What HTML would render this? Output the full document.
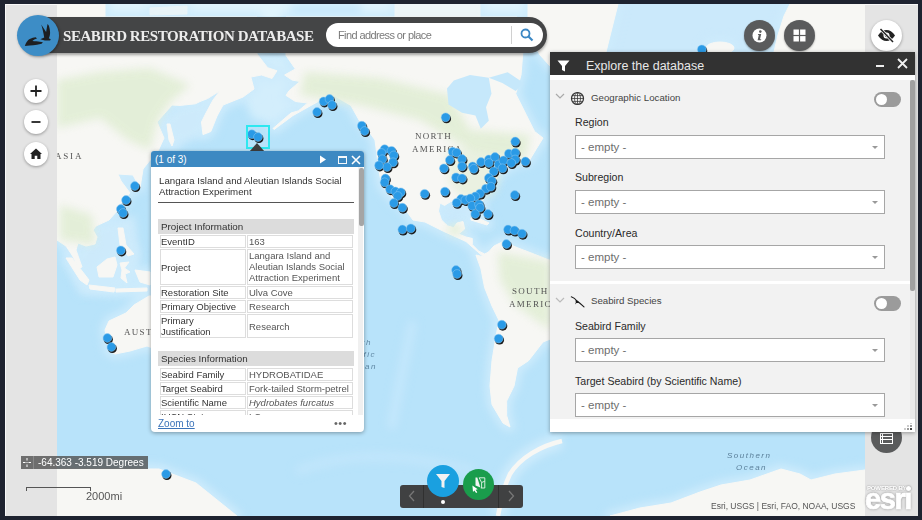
<!DOCTYPE html>
<html><head><meta charset="utf-8">
<style>
*{box-sizing:border-box;margin:0;padding:0}
html,body{width:922px;height:520px;overflow:hidden;background:#1e2330;font-family:"Liberation Sans",sans-serif;position:relative}
.a{position:absolute}
#frame{left:5px;top:4px;width:913px;height:512px;background:#e4e4e4;overflow:hidden}
#map{left:57px;top:4px;width:808px;height:512px;background:#b9e0f7;overflow:hidden}
#titlebar{left:30px;top:17px;width:517px;height:36px;background:#444546;border-radius:0 18px 18px 0;box-shadow:0 2px 3px rgba(0,0,0,.35)}
#logo{left:17px;top:15px;width:42px;height:41px;border-radius:50%;background:#3d8dc6;box-shadow:1px 1px 3px rgba(0,0,0,.35)}
#ttl{left:63px;top:28px;font-family:"Liberation Serif",serif;font-weight:bold;font-size:15px;color:#ececec;letter-spacing:-0.45px;white-space:nowrap;line-height:17px}
#search{left:326px;top:23px;width:217px;height:24px;background:#fff;border-radius:12px}
#search .ph{position:absolute;left:12px;top:6px;font-size:11px;color:#7a7a7a;letter-spacing:-0.6px;white-space:nowrap}
#search .sep{position:absolute;left:185px;top:3px;width:1px;height:18px;background:#d0d0d0}
.navbtn{position:absolute;width:24px;height:24px;border-radius:50%;background:#fff;box-shadow:0 1px 3px rgba(0,0,0,.35)}
.cbtn{position:absolute;width:31px;height:31px;border-radius:50%;background:#5a5b5c;box-shadow:0 1px 2px rgba(0,0,0,.3)}

#panel{left:550px;top:52px;width:365px;height:380px;background:#fff;box-shadow:0 1px 4px rgba(0,0,0,.35)}
#phead{left:550px;top:52px;width:365px;height:23px;background:#323232}
#ptitle{left:586px;top:59px;font-size:12.5px;color:#e8e8e8;white-space:nowrap;line-height:15px}
#pbody{left:550px;top:80px;width:360px;height:339px;background:#f2f2f2}
#sb{left:910px;top:80px;width:5px;height:339px;background:#e9e9e9}
#sbt{left:910px;top:80px;width:5px;height:211px;background:#a0a0a0;border-radius:2px}
.sech{position:absolute;font-size:9.7px;color:#444;white-space:nowrap;line-height:12px}
.lbl{position:absolute;left:575px;font-size:10.6px;color:#2a2a2a;white-space:nowrap;line-height:13px}
.sel{position:absolute;left:575px;width:310px;height:24px;background:#fff;border:1px solid #a6a6a6}
.sel span{position:absolute;left:5px;top:5px;font-size:11.5px;color:#6e6e6e;line-height:13px;white-space:nowrap}
.sel i{position:absolute;right:6px;top:10px;width:0;height:0;border-left:3.5px solid transparent;border-right:3.5px solid transparent;border-top:3.5px solid #999}
.tog{position:absolute;left:874px;margin-top:0.5px;width:26.5px;height:15px;border-radius:8px;background:#9b9b9b}
.tog i{position:absolute;left:2px;top:2px;width:11px;height:11px;border-radius:50%;background:#fff}

#popup{left:151px;top:151px;width:213px;height:281px;background:#fff;border-radius:3px 3px 4px 4px;box-shadow:0 1px 4px rgba(0,0,0,.35)}
#pophead{left:151px;top:151px;width:213px;height:16px;background:#3d89c2;border-radius:3px 3px 0 0}
.pt{position:absolute;font-size:10px;color:#333;white-space:nowrap;line-height:11px}
.tr{position:absolute;left:159px;width:194px;height:13px}
.tr .c1{position:absolute;left:1px;top:0;width:86px;height:100%;border:1px solid #ddd}
.tr .c2{position:absolute;left:88px;top:0;width:106px;height:100%;border:1px solid #ddd}
.tr span{position:absolute;left:0px;font-size:9.5px;color:#333;white-space:nowrap;line-height:11px}
.tr .c2 span{color:#555;left:1px}
.bar{position:absolute;left:158px;width:196px;height:15px;background:#dcdcdc}
.bar span{position:absolute;left:3px;top:2px;font-size:9.8px;color:#333;line-height:11px;white-space:nowrap}
</style></head><body>
<div id="frame" class="a"></div>
<div class="a" style="left:5px;top:4px;width:913px;height:1px;background:#f8f8f8"></div>
<div class="a" style="left:5px;top:4px;width:1px;height:512px;background:#f8f8f8"></div>
<div id="map" class="a">
  <svg width="808" height="512" viewBox="57 4 808 512" style="position:absolute;left:0;top:0">
<rect x="57" y="4" width="808" height="512" fill="#b8e3fa"/>
<rect x="57" y="4" width="808" height="14" fill="#e0f4fd"/><rect x="291" y="4" width="70" height="14" fill="#c6e7fb" filter="url(#bl)"/><rect x="600" y="4" width="200" height="50" fill="#cbe9fb"/>
<defs><filter id="bl" x="-20%" y="-20%" width="140%" height="140%"><feGaussianBlur stdDeviation="4"/></filter></defs><g stroke="#c4e7fc" fill="none" filter="url(#bl)" stroke-linecap="round"><path d="M412,325 C405,360 398,390 392,425" stroke-width="9"/><path d="M300,470 C340,455 390,450 470,470" stroke-width="10" opacity="0.7"/></g><g fill="#cdeafb" filter="url(#bl)"><path d="M250,77 L257,54 L286,55 L300,85 L302,105 L276,126 L252,118 L243,97 Z" fill="#d3eefc"/><path d="M157,122 L180,105 L221,98 L205,135 L170,150 Z"/><path d="M95,225 L135,215 L140,260 L120,290 L80,295 L70,260 Z"/><path d="M440,205 L480,200 L489,225 L465,222 L445,222 Z" fill="#c9e8fb"/></g><g fill="#cdebfc" stroke="#cdebfc" stroke-width="10" stroke-linejoin="round" filter="url(#bl)">
<path d="M57,4 L105,4 L105,17 L257,17 L257,54 L267.7,67.7 L277,70.8 L272,78.5 L261.5,75 L250.8,77 L254,89 L243,97 L223,105 L217,116 L210.8,131.5 L203,134.6 L201.5,122 L206,113 L213,100 L220,90.8 L207.7,98.5 L200,101.5 L195.4,103.8 L180,105.4 L172,105 L157,122 L164,138 L158.5,150 L149,161.5 L143,169 L140,188 L133,175 L118,174 L121,181 L130,193 L121,203 L117,211 L109,220 L96,226 L93,230 L97,237 L95,244 L86,246 L78,243 L76,250 L82,267 L79,268 L72,255 L66,246 L57,240 Z"/><path d="M167,124 L170,124 L174,140 L172,146 L169,140 Z"/>
<path d="M66,258 L72,258 L89,280 L87,285 L80,280 Z"/>
<path d="M89,285 L115,288 L114,292 L90,289 Z"/>
<path d="M97,267 L107,259 L115,257 L117,265 L113,277 L99,277 Z"/>
<path d="M118,228 L123,228 L126,245 L134,254 L128,256 L120,245 Z"/><path d="M120,263 L129,262 L124.5,268 L130,272 L125,274 L127,283 L121,278 L122,270 Z"/><path d="M116,289 L147,288 L147,291 L116,292 Z"/><path d="M135,270 L150,272 L150,285 L140,282 Z"/>
<path d="M149,296 L134,305 L126,313 L109,321 L105,330 L107,340 L109,351 L115,354 L130,351 L147,346 L250,380 L250,296 Z"/>
<path d="M470.8,218 L480,219 L489,223 L487,225 L471,220 Z"/><path d="M57,469 L159,469 L196,483 L237,516 L57,516 Z"/>
<path d="M610,516 L640,508 L671,503 L700,492 L721,485 L750,480 L781,469 L800,474 L811,480 L835,474 L865,470 L865,516 Z"/>
<path d="M290,17 L517,17 L523,50 L521,75 L515.7,93.8 L526.5,115.4 L534.6,131.5 L543,138 L535,151 L529,161 L515,163 L500,173 L492,185 L485,191 L481.5,206 L475.4,217 L470.8,203 L466,200 L450.8,201.5 L444.6,205.4 L440,203 L438.5,211 L441.5,220 L447.7,226 L453.8,227.7 L457,223 L463,221.5 L464.6,229 L458.5,234 L466,237 L472.3,238.5 L472.3,244.6 L478.5,251 L484.6,254 L490.8,251 L494,246 L486,259 L466,241.5 L443,231 L425,222 L413,220 L405,209 L393,198.5 L382,186 L379,171 L375,140 L370,133 L359,120 L351,105.5 L340,99 L330,93 L319,101 L293,115.5 L274,129.5 L273,128.5 L291,113 L298.5,110.8 L307.7,103 L295.4,101.5 L286,95.4 L289,90.8 L300,81.5 L292,80 L284.6,75 L295.4,69 L286,55.4 L286,17 Z"/>
<path d="M484,257 L494,246 L503,241.6 L518,248 L526,251 L549,260 L580,266 L610,290 L600,320 L560,335 L543,342 L528.5,360.7 L517.5,368 L514,386 L506.6,401 L506.6,415.5 L510,427 L503,423 L492,404.5 L490,386 L492,360.7 L495.6,338.7 L499,320.4 L492,306 L484.6,287.5 L481,269 L476,255 Z"/>
<path d="M528,4 L618,4 L606,52 L580,70 L550,66 L540,55 L532,40 L528,17 Z"/><path d="M395,4 L480,4 L480,17 L395,17 Z" opacity="0.7"/><path d="M150,8 L187,6 L187,14 L150,15 Z" opacity="0.6"/><ellipse cx="720" cy="48" rx="14" ry="6"/>
<path d="M790,4 L865,4 L865,52 L774,52 L778,35 L784,16 Z"/>
</g><g fill="#f7f7f4" stroke="#f7f7f4" stroke-width="1">
<path d="M57,4 L105,4 L105,17 L257,17 L257,54 L267.7,67.7 L277,70.8 L272,78.5 L261.5,75 L250.8,77 L254,89 L243,97 L223,105 L217,116 L210.8,131.5 L203,134.6 L201.5,122 L206,113 L213,100 L220,90.8 L207.7,98.5 L200,101.5 L195.4,103.8 L180,105.4 L172,105 L157,122 L164,138 L158.5,150 L149,161.5 L143,169 L140,188 L133,175 L118,174 L121,181 L130,193 L121,203 L117,211 L109,220 L96,226 L93,230 L97,237 L95,244 L86,246 L78,243 L76,250 L82,267 L79,268 L72,255 L66,246 L57,240 Z"/><path d="M167,124 L170,124 L174,140 L172,146 L169,140 Z"/>
<path d="M66,258 L72,258 L89,280 L87,285 L80,280 Z"/>
<path d="M89,285 L115,288 L114,292 L90,289 Z"/>
<path d="M97,267 L107,259 L115,257 L117,265 L113,277 L99,277 Z"/>
<path d="M118,228 L123,228 L126,245 L134,254 L128,256 L120,245 Z"/><path d="M120,263 L129,262 L124.5,268 L130,272 L125,274 L127,283 L121,278 L122,270 Z"/><path d="M116,289 L147,288 L147,291 L116,292 Z"/><path d="M135,270 L150,272 L150,285 L140,282 Z"/>
<path d="M149,296 L134,305 L126,313 L109,321 L105,330 L107,340 L109,351 L115,354 L130,351 L147,346 L250,380 L250,296 Z"/>
<path d="M470.8,218 L480,219 L489,223 L487,225 L471,220 Z"/><path d="M57,469 L159,469 L196,483 L237,516 L57,516 Z"/>
<path d="M610,516 L640,508 L671,503 L700,492 L721,485 L750,480 L781,469 L800,474 L811,480 L835,474 L865,470 L865,516 Z"/>
<path d="M290,17 L517,17 L523,50 L521,75 L515.7,93.8 L526.5,115.4 L534.6,131.5 L543,138 L535,151 L529,161 L515,163 L500,173 L492,185 L485,191 L481.5,206 L475.4,217 L470.8,203 L466,200 L450.8,201.5 L444.6,205.4 L440,203 L438.5,211 L441.5,220 L447.7,226 L453.8,227.7 L457,223 L463,221.5 L464.6,229 L458.5,234 L466,237 L472.3,238.5 L472.3,244.6 L478.5,251 L484.6,254 L490.8,251 L494,246 L486,259 L466,241.5 L443,231 L425,222 L413,220 L405,209 L393,198.5 L382,186 L379,171 L375,140 L370,133 L359,120 L351,105.5 L340,99 L330,93 L319,101 L293,115.5 L274,129.5 L273,128.5 L291,113 L298.5,110.8 L307.7,103 L295.4,101.5 L286,95.4 L289,90.8 L300,81.5 L292,80 L284.6,75 L295.4,69 L286,55.4 L286,17 Z"/>
<path d="M484,257 L494,246 L503,241.6 L518,248 L526,251 L549,260 L580,266 L610,290 L600,320 L560,335 L543,342 L528.5,360.7 L517.5,368 L514,386 L506.6,401 L506.6,415.5 L510,427 L503,423 L492,404.5 L490,386 L492,360.7 L495.6,338.7 L499,320.4 L492,306 L484.6,287.5 L481,269 L476,255 Z"/>
<path d="M528,4 L618,4 L606,52 L580,70 L550,66 L540,55 L532,40 L528,17 Z"/><path d="M395,4 L480,4 L480,17 L395,17 Z" opacity="0.7"/><path d="M150,8 L187,6 L187,14 L150,15 Z" opacity="0.6"/><ellipse cx="720" cy="48" rx="14" ry="6"/>
<path d="M790,4 L865,4 L865,52 L774,52 L778,35 L784,16 Z"/>
</g><g fill="#e0edd3" opacity="0.85" filter="url(#bl)"><path d="M57,80 L100,72 L150,68 L190,85 L170,102 L157,122 L150,150 L128,140 L100,118 L57,128 Z"/><path d="M60,205 L92,215 L95,245 L78,242 L60,240 Z"/><path d="M305,72 L380,78 L450,95 L470,130 L530,135 L525,160 L470,150 L420,120 L360,105 L300,95 Z"/><path d="M445,150 L505,150 L495,195 L465,200 L450,185 Z" opacity="0.7"/><path d="M498,252 L550,262 L550,330 L515,305 L500,280 Z"/><ellipse cx="455" cy="230" rx="8" ry="5"/></g>
<path d="M562,441 C540,446 520,458 510,474 C503,488 500,505 498,516" stroke="#cdebfc" stroke-width="16" fill="none" filter="url(#bl)"/><path d="M562,441 C540,446 520,458 510,474 C503,488 500,505 498,516" stroke="#f7f7f4" stroke-width="4.5" fill="none"/>

<g font-family="Liberation Serif" font-size="9" fill="#555" letter-spacing="1.3">
<text x="55" y="159" letter-spacing="1.8">ASIA</text>
<text x="124" y="335">AUST</text>
<text x="415" y="139">NORTH</text>
<text x="412" y="152">AMERICA</text>
<text x="512" y="294">SOUTH</text>
<text x="509" y="307">AMERIC</text>
</g>
<g font-family="Liberation Sans" font-style="italic" font-size="8" fill="#5f87a3" letter-spacing="1.5" text-anchor="end">
<text x="372" y="345">South</text><text x="376" y="357">Pacific</text><text x="377" y="369">Ocean</text></g>
<g fill="#c6e8fb">
<path d="M453.8,80.4 L470,75 L488.8,77.7 L491.5,93.8 L486,107.3 L488.8,120.8 L480.8,128.8 L475.4,115.4 L462,112.7 L448.5,104.6 L447,88.5 Z"/>
<path d="M488.8,77.7 L507.7,72.3 L523.8,83 L515.7,91 L502.3,83 Z"/>
</g>
<g fill="#1c1c1c"><circle cx="108.3" cy="339.4" r="4.6"/><circle cx="112.3" cy="348.4" r="4.6"/><circle cx="135.7" cy="187.4" r="4.6"/><circle cx="126.9" cy="201.4" r="4.6"/><circle cx="121.7" cy="210.4" r="4.6"/><circle cx="123.9" cy="214.4" r="4.6"/><circle cx="121.7" cy="251.8" r="4.6"/><circle cx="166.9" cy="475.4" r="4.6"/><circle cx="252.7" cy="135.6" r="4.6"/><circle cx="258.9" cy="138.4" r="4.6"/><circle cx="317.9" cy="113.4" r="4.6"/><circle cx="324.5" cy="102.8" r="4.6"/><circle cx="330.4" cy="100.4" r="4.6"/><circle cx="332.9" cy="106.4" r="4.6"/><circle cx="362.7" cy="127.1" r="4.6"/><circle cx="365.5" cy="132.4" r="4.6"/><circle cx="446.5" cy="118.7" r="4.6"/><circle cx="385.5" cy="150.6" r="4.6"/><circle cx="382.4" cy="154.4" r="4.6"/><circle cx="392.4" cy="152.2" r="4.6"/><circle cx="394.7" cy="156.8" r="4.6"/><circle cx="383.2" cy="160.6" r="4.6"/><circle cx="393.9" cy="163.7" r="4.6"/><circle cx="387.9" cy="168.4" r="4.6"/><circle cx="379.9" cy="166.8" r="4.6"/><circle cx="386.3" cy="179.9" r="4.6"/><circle cx="385.5" cy="183.7" r="4.6"/><circle cx="390.9" cy="190.6" r="4.6"/><circle cx="396.3" cy="192.9" r="4.6"/><circle cx="401.7" cy="193.7" r="4.6"/><circle cx="398.6" cy="197.4" r="4.6"/><circle cx="394.7" cy="204.4" r="4.6"/><circle cx="403.2" cy="209.1" r="4.6"/><circle cx="425.5" cy="195.2" r="4.6"/><circle cx="453.6" cy="153.1" r="4.6"/><circle cx="457.5" cy="154.1" r="4.6"/><circle cx="450.7" cy="161.4" r="4.6"/><circle cx="462.9" cy="160.4" r="4.6"/><circle cx="462.9" cy="167.8" r="4.6"/><circle cx="444.8" cy="169.7" r="4.6"/><circle cx="473.6" cy="167.8" r="4.6"/><circle cx="474.6" cy="170.2" r="4.6"/><circle cx="481.9" cy="163.4" r="4.6"/><circle cx="489.7" cy="160.9" r="4.6"/><circle cx="489.7" cy="164.4" r="4.6"/><circle cx="495.9" cy="158.4" r="4.6"/><circle cx="499.5" cy="165.8" r="4.6"/><circle cx="504.4" cy="161.9" r="4.6"/><circle cx="503.4" cy="169.7" r="4.6"/><circle cx="494.6" cy="172.7" r="4.6"/><circle cx="509.7" cy="155.1" r="4.6"/><circle cx="516.1" cy="154.1" r="4.6"/><circle cx="516.1" cy="160.9" r="4.6"/><circle cx="512.2" cy="164.4" r="4.6"/><circle cx="526.3" cy="162.9" r="4.6"/><circle cx="516.1" cy="142.9" r="4.6"/><circle cx="456.9" cy="178.8" r="4.6"/><circle cx="462.9" cy="179.8" r="4.6"/><circle cx="489.7" cy="179.4" r="4.6"/><circle cx="492.7" cy="182.3" r="4.6"/><circle cx="486.8" cy="190.1" r="4.6"/><circle cx="491.7" cy="188.1" r="4.6"/><circle cx="480.9" cy="195.0" r="4.6"/><circle cx="476.1" cy="197.9" r="4.6"/><circle cx="445.8" cy="193.0" r="4.6"/><circle cx="461.9" cy="200.4" r="4.6"/><circle cx="466.3" cy="201.4" r="4.6"/><circle cx="471.2" cy="199.8" r="4.6"/><circle cx="457.5" cy="204.2" r="4.6"/><circle cx="473.1" cy="207.2" r="4.6"/><circle cx="479.9" cy="205.7" r="4.6"/><circle cx="480.9" cy="209.1" r="4.6"/><circle cx="476.1" cy="215.4" r="4.6"/><circle cx="488.8" cy="215.4" r="4.6"/><circle cx="515.6" cy="196.4" r="4.6"/><circle cx="403.2" cy="230.9" r="4.6"/><circle cx="411.7" cy="229.8" r="4.6"/><circle cx="508.9" cy="230.9" r="4.6"/><circle cx="515.4" cy="231.9" r="4.6"/><circle cx="522.9" cy="235.1" r="4.6"/><circle cx="507.3" cy="245.4" r="4.6"/><circle cx="456.9" cy="271.4" r="4.6"/><circle cx="457.9" cy="275.4" r="4.6"/><circle cx="502.7" cy="326.1" r="4.6"/><circle cx="499.5" cy="340.0" r="4.6"/><circle cx="702.7" cy="50.8" r="4.6"/></g><g fill="#2a9ae6" stroke="#8fcaf2" stroke-width="0.5"><circle cx="107.4" cy="338.0" r="4.4"/><circle cx="111.4" cy="347.0" r="4.4"/><circle cx="134.8" cy="186.0" r="4.4"/><circle cx="126.0" cy="200.0" r="4.4"/><circle cx="120.8" cy="209.0" r="4.4"/><circle cx="123.0" cy="213.0" r="4.4"/><circle cx="120.8" cy="250.4" r="4.4"/><circle cx="166.0" cy="474.0" r="4.4"/><circle cx="251.8" cy="134.2" r="4.4"/><circle cx="258.0" cy="137.0" r="4.4"/><circle cx="317.0" cy="112.0" r="4.4"/><circle cx="323.6" cy="101.4" r="4.4"/><circle cx="329.5" cy="99.0" r="4.4"/><circle cx="332.0" cy="105.0" r="4.4"/><circle cx="361.8" cy="125.7" r="4.4"/><circle cx="364.6" cy="131.0" r="4.4"/><circle cx="445.6" cy="117.3" r="4.4"/><circle cx="384.6" cy="149.2" r="4.4"/><circle cx="381.5" cy="153.0" r="4.4"/><circle cx="391.5" cy="150.8" r="4.4"/><circle cx="393.8" cy="155.4" r="4.4"/><circle cx="382.3" cy="159.2" r="4.4"/><circle cx="393.0" cy="162.3" r="4.4"/><circle cx="387.0" cy="167.0" r="4.4"/><circle cx="379.0" cy="165.4" r="4.4"/><circle cx="385.4" cy="178.5" r="4.4"/><circle cx="384.6" cy="182.3" r="4.4"/><circle cx="390.0" cy="189.2" r="4.4"/><circle cx="395.4" cy="191.5" r="4.4"/><circle cx="400.8" cy="192.3" r="4.4"/><circle cx="397.7" cy="196.0" r="4.4"/><circle cx="393.8" cy="203.0" r="4.4"/><circle cx="402.3" cy="207.7" r="4.4"/><circle cx="424.6" cy="193.8" r="4.4"/><circle cx="452.7" cy="151.7" r="4.4"/><circle cx="456.6" cy="152.7" r="4.4"/><circle cx="449.8" cy="160.0" r="4.4"/><circle cx="462.0" cy="159.0" r="4.4"/><circle cx="462.0" cy="166.4" r="4.4"/><circle cx="443.9" cy="168.3" r="4.4"/><circle cx="472.7" cy="166.4" r="4.4"/><circle cx="473.7" cy="168.8" r="4.4"/><circle cx="481.0" cy="162.0" r="4.4"/><circle cx="488.8" cy="159.5" r="4.4"/><circle cx="488.8" cy="163.0" r="4.4"/><circle cx="495.0" cy="157.0" r="4.4"/><circle cx="498.6" cy="164.4" r="4.4"/><circle cx="503.5" cy="160.5" r="4.4"/><circle cx="502.5" cy="168.3" r="4.4"/><circle cx="493.7" cy="171.3" r="4.4"/><circle cx="508.8" cy="153.7" r="4.4"/><circle cx="515.2" cy="152.7" r="4.4"/><circle cx="515.2" cy="159.5" r="4.4"/><circle cx="511.3" cy="163.0" r="4.4"/><circle cx="525.4" cy="161.5" r="4.4"/><circle cx="515.2" cy="141.5" r="4.4"/><circle cx="456.0" cy="177.4" r="4.4"/><circle cx="462.0" cy="178.4" r="4.4"/><circle cx="488.8" cy="178.0" r="4.4"/><circle cx="491.8" cy="180.9" r="4.4"/><circle cx="485.9" cy="188.7" r="4.4"/><circle cx="490.8" cy="186.7" r="4.4"/><circle cx="480.0" cy="193.6" r="4.4"/><circle cx="475.2" cy="196.5" r="4.4"/><circle cx="444.9" cy="191.6" r="4.4"/><circle cx="461.0" cy="199.0" r="4.4"/><circle cx="465.4" cy="200.0" r="4.4"/><circle cx="470.3" cy="198.4" r="4.4"/><circle cx="456.6" cy="202.8" r="4.4"/><circle cx="472.2" cy="205.8" r="4.4"/><circle cx="479.0" cy="204.3" r="4.4"/><circle cx="480.0" cy="207.7" r="4.4"/><circle cx="475.2" cy="214.0" r="4.4"/><circle cx="487.9" cy="214.0" r="4.4"/><circle cx="514.7" cy="195.0" r="4.4"/><circle cx="402.3" cy="229.5" r="4.4"/><circle cx="410.8" cy="228.4" r="4.4"/><circle cx="508.0" cy="229.5" r="4.4"/><circle cx="514.5" cy="230.5" r="4.4"/><circle cx="522.0" cy="233.7" r="4.4"/><circle cx="506.4" cy="244.0" r="4.4"/><circle cx="456.0" cy="270.0" r="4.4"/><circle cx="457.0" cy="274.0" r="4.4"/><circle cx="501.8" cy="324.7" r="4.4"/><circle cx="498.6" cy="338.6" r="4.4"/><circle cx="701.8" cy="49.4" r="4.4"/></g></svg>
</div>
<div id="titlebar" class="a"></div>
<div id="logo" class="a"></div>
<div id="ttl" class="a">SEABIRD RESTORATION DATABASE</div>
<div id="search" class="a"><span class="ph">Find address or place</span><span class="sep"></span><svg style="position:absolute;left:194px;top:5px" width="14" height="14" viewBox="0 0 14 14"><circle cx="5.5" cy="5.5" r="4" fill="none" stroke="#3b87c4" stroke-width="1.8"/><path d="M8.5,8.5 L12.5,12.5" stroke="#3b87c4" stroke-width="2.2"/></svg></div>
<svg class="a" style="left:24px;top:6px" width="28" height="0"></svg>
<svg class="a" style="left:17px;top:15px" width="42" height="41" viewBox="0 0 42 41"><g fill="#1d1f22"><path d="M24.2,9.5 L29.1,17.1 L30.5,8.9 C31.5,9.8 32,10.5 32.1,11.5 C32.8,14 33.1,16 33.1,18 C33,20 32.5,22 31.8,23.3 L33.7,24.2 L33.1,25.5 L27.8,25.5 L23.3,24.2 L27.2,22.6 C26.5,18 25.5,13 24.2,9.5 Z"/><path d="M7.9,31.1 C8.2,29.5 8.8,28.2 9.5,27.2 C10.5,25.6 11.5,24.6 12.8,23.9 C14.8,23 16.8,22.5 18.7,22.3 L20,23.6 C18,24.3 16.5,25 15.4,25.9 C16.5,26.1 18,26.1 19.3,26.2 C22,26.5 24,26.8 25.9,27.2 L24.6,28.8 C23,29.3 21.5,29.6 20,29.8 C17.5,30.1 15,30.3 12.8,30.5 C11,30.7 9.5,30.9 7.9,31.1 Z"/></g></svg>
<div class="navbtn" style="left:24px;top:79px"><svg width="24" height="24" viewBox="0 0 24 24"><path d="M12,6.5 V17.5 M6.5,12 H17.5" stroke="#222" stroke-width="1.8"/></svg></div>
<div class="navbtn" style="left:24px;top:110px"><svg width="24" height="24" viewBox="0 0 24 24"><path d="M7.5,12 H16.5" stroke="#222" stroke-width="1.8"/></svg></div>
<div class="navbtn" style="left:24px;top:142px"><svg width="24" height="24" viewBox="0 0 24 24"><path d="M12,6.5 L18,12 L16.5,12 L16.5,17 L13.3,17 L13.3,13.8 L10.7,13.8 L10.7,17 L7.5,17 L7.5,12 L6,12 Z" fill="#222"/></svg></div>
<div class="cbtn" style="left:744px;top:20px"><svg width="31" height="31" viewBox="0 0 31 31"><circle cx="15.5" cy="15.5" r="7" fill="#fff"/><circle cx="16.3" cy="11.6" r="1.3" fill="#5a5b5c"/><path d="M14.2,14 L17.2,14 L16,19.2 L17.3,19.2 L17,20.3 L13.6,20.3 L14.8,15.1 L13.9,15.1 Z" fill="#5a5b5c"/></svg></div>
<div class="cbtn" style="left:784px;top:20px"><svg width="31" height="31" viewBox="0 0 31 31"><g fill="#fff"><rect x="9.5" y="9.5" width="5.4" height="5.4"/><rect x="16.1" y="9.5" width="5.4" height="5.4"/><rect x="9.5" y="16.1" width="5.4" height="5.4"/><rect x="16.1" y="16.1" width="5.4" height="5.4"/></g></svg></div>
<div class="navbtn" style="left:871px;top:20px;width:31px;height:31px"><svg width="31" height="31" viewBox="0 0 31 31"><path d="M7,15.5 C9.5,11.5 12.5,10 15.5,10 C18.5,10 21.5,11.5 24,15.5 C21.5,19.5 18.5,21 15.5,21 C12.5,21 9.5,19.5 7,15.5 Z" fill="#222"/><circle cx="15.5" cy="15.5" r="3" fill="#fff"/><circle cx="15.5" cy="15.5" r="1.7" fill="#222"/><path d="M9.5,9 L22,22" stroke="#fff" stroke-width="3"/><path d="M9.5,9 L22,22" stroke="#222" stroke-width="1.5"/></svg></div>


<div class="a" style="left:246px;top:125px;width:24px;height:24px;border:2px solid #2ee8f0"></div>
<svg class="a" style="left:249px;top:143px" width="16" height="9" viewBox="0 0 16 9"><path d="M8,0 L16,9 L0,9 Z" fill="#3f3f3f"/></svg>
<div id="popup" class="a"></div>
<div id="pophead" class="a"></div>
<div class="pt" style="left:155px;top:154px;color:#fff">(1 of 3)</div>
<svg class="a" style="left:319px;top:155px" width="8" height="9" viewBox="0 0 8 9"><path d="M1,0.5 L7,4.5 L1,8.5 Z" fill="#fff"/></svg>
<div class="a" style="left:337.5px;top:155.5px;width:9px;height:8px;border:1.2px solid #f4f8fb;border-top-width:2.2px"></div>
<svg class="a" style="left:351px;top:155px" width="10" height="10" viewBox="0 0 10 10"><path d="M1,1 L9,9 M9,1 L1,9" stroke="#fff" stroke-width="1.6"/></svg>
<div class="a" style="left:151px;top:167px;width:207px;height:248px;overflow:hidden">
</div>
<div class="pt" style="left:159px;top:175px;font-size:9.7px">Langara Island and Aleutian Islands Social</div>
<div class="pt" style="left:159px;top:186px;font-size:9.7px">Attraction Experiment</div>
<div class="a" style="left:158px;top:202px;width:196px;height:1px;background:#555"></div>
<div class="bar" style="top:219px"><span>Project Information</span></div>
<div class="tr" style="top:235px"><div class="c1"><span style="top:0px">EventID</span></div><div class="c2"><span style="top:0px">163</span></div></div>
<div class="tr" style="top:249px;height:36px"><div class="c1"><span style="top:12px">Project</span></div><div class="c2"><span style="top:0px;line-height:11px">Langara Island and<br>Aleutian Islands Social<br>Attraction Experiment</span></div></div>
<div class="tr" style="top:286px"><div class="c1"><span style="top:0px">Restoration Site</span></div><div class="c2"><span style="top:0px">Ulva Cove</span></div></div>
<div class="tr" style="top:300px"><div class="c1"><span style="top:0px">Primary Objective</span></div><div class="c2"><span style="top:0px">Research</span></div></div>
<div class="tr" style="top:314px;height:24px"><div class="c1"><span style="top:0px">Primary<br>Justification</span></div><div class="c2"><span style="top:6px">Research</span></div></div>
<div class="bar" style="top:351px"><span>Species Information</span></div>
<div class="tr" style="top:368px"><div class="c1"><span style="top:0px">Seabird Family</span></div><div class="c2"><span style="top:0px">HYDROBATIDAE</span></div></div>
<div class="tr" style="top:382px"><div class="c1"><span style="top:0px">Target Seabird</span></div><div class="c2"><span style="top:0px">Fork-tailed Storm-petrel</span></div></div>
<div class="tr" style="top:396px"><div class="c1"><span style="top:0px">Scientific Name</span></div><div class="c2"><span style="top:0px;font-style:italic">Hydrobates furcatus</span></div></div>
<div class="a" style="left:151px;top:410px;width:207px;height:5px;overflow:hidden"><div class="tr" style="top:0px;left:8px"><div class="c1"><span style="top:0px">IUCN Status</span></div><div class="c2"><span style="top:0px">LC</span></div></div></div>
<div class="a" style="left:358px;top:167px;width:5px;height:248px;background:#f0f0f0"></div>
<div class="a" style="left:359px;top:167.5px;width:4.5px;height:58px;background:#a5a5a5;border-radius:2px"></div>
<div class="pt" style="left:158px;top:418px;color:#3b73b9;text-decoration:underline">Zoom to</div>
<div class="pt" style="left:334px;top:418px;color:#666;font-size:11px;letter-spacing:0.5px">&bull;&bull;&bull;</div>

<div class="a" style="left:21px;top:456px;width:127px;height:13px;background:rgba(80,80,80,.8)"></div>
<div class="a" style="left:33px;top:456px;width:1px;height:13px;background:#888"></div>
<svg class="a" style="left:21px;top:456px" width="12" height="13" viewBox="0 0 12 13"><g fill="#fff"><rect x="5.5" y="2" width="1" height="2.5"/><rect x="5.5" y="8.5" width="1" height="2.5"/><rect x="2" y="6" width="2.5" height="1"/><rect x="7.5" y="6" width="2.5" height="1"/><rect x="5.5" y="6" width="1" height="1"/></g></svg>
<div class="a" style="left:38px;top:457px;font-size:10px;color:#fff;white-space:nowrap;line-height:12px">-64.363 -3.519 Degrees</div>
<div class="a" style="left:26px;top:487px;width:65px;height:4px;border:1px solid #555;border-bottom:none"></div>
<div class="a" style="left:86px;top:490px;font-size:11px;color:#555;white-space:nowrap;line-height:13px">2000mi</div>
<div class="a" style="left:711px;top:501px;font-size:8.5px;color:#555;white-space:nowrap;line-height:10px">Esri, USGS | Esri, FAO, NOAA, USGS</div>
<div class="a" style="left:727px;top:451px;font-size:8px;color:#5a7f99;font-style:italic;letter-spacing:1.5px;white-space:nowrap;line-height:10px">Southern</div>
<div class="a" style="left:736px;top:463px;font-size:8px;color:#5a7f99;font-style:italic;letter-spacing:1.5px;white-space:nowrap;line-height:10px">Ocean</div>
<div class="a" style="left:867px;top:485px;font-size:6px;font-weight:bold;color:#fff;white-space:nowrap;line-height:7px;letter-spacing:-0.15px;-webkit-text-stroke:0.2px #fff;text-shadow:0 0 1.5px rgba(0,0,0,.6)">POWERED BY</div>
<div class="a" style="left:906px;top:486px;width:5px;height:5px;border-radius:50%;background:#fff;box-shadow:0 0 2px rgba(0,0,0,.5)"></div>
<div class="a" style="left:865px;top:483px;font-size:29px;font-weight:bold;color:#fff;white-space:nowrap;line-height:32px;letter-spacing:-1.4px;-webkit-text-stroke:0.7px #fff;text-shadow:0 0 3px rgba(0,0,0,.45)">esrı</div>
<div class="a" style="left:871px;top:422px;width:31px;height:31px;border-radius:50%;background:#5a5b5c"><svg width="31" height="31" viewBox="0 0 31 31"><g fill="none" stroke="#fff" stroke-width="1"><rect x="9.5" y="11.5" width="12" height="10"/><path d="M9.5,14.5 H21.5 M9.5,17.5 H21.5 M11.5,11.5 V21.5"/></g></svg></div>
<div class="a" style="left:400px;top:485px;width:123px;height:23px;background:#404142;border-radius:3px"></div>
<div class="a" style="left:423px;top:485px;width:1px;height:23px;background:#303030"></div>
<div class="a" style="left:498px;top:485px;width:1px;height:23px;background:#303030"></div>
<svg class="a" style="left:406px;top:489px" width="12" height="14" viewBox="0 0 12 14"><path d="M8,2 L3.5,7 L8,12" stroke="#777" stroke-width="1.3" fill="none"/></svg>
<svg class="a" style="left:505px;top:489px" width="12" height="14" viewBox="0 0 12 14"><path d="M4,2 L8.5,7 L4,12" stroke="#777" stroke-width="1.3" fill="none"/></svg>
<div class="a" style="left:427px;top:465px;width:32px;height:32px;border-radius:50%;background:#1aa0e0"><svg width="32" height="32" viewBox="0 0 32 32"><path d="M9,9 L23,9 L17.5,16 L17.5,23 L14.5,22 L14.5,16 Z" fill="#f2f2f2"/></svg></div>
<div class="a" style="left:463px;top:469px;width:31px;height:31px;border-radius:50%;background:#1a9d4c"><svg width="31" height="31" viewBox="0 0 31 31"><path d="M12.5,8.6 L14.3,8.6 L17.4,18.5 L12.5,16.6 Z" fill="#f4f4f4"/><g fill="none" stroke="#e8f5ec" stroke-width="0.9"><path d="M16.2,8.8 H21.8 V19 H17.8 M16.2,8.8 L18.6,13.5 L21.8,12.2 M18.6,13.5 V19"/></g><path d="M9.4,16.4 L10,23 L11.4,21.5 L13.1,24 L14.3,23.2 L12.6,20.8 L14.8,20.3 Z" fill="#fff"/></svg></div>
<div class="a" style="left:441px;top:500px;width:4px;height:4px;border-radius:50%;background:#fff"></div>
<div id="panel" class="a"></div>
<div id="phead" class="a"></div>
<svg class="a" style="left:557px;top:60px" width="13" height="12" viewBox="0 0 13 12"><path d="M0.5,0.5 L12.5,0.5 L8,6 L8,11.5 L5,10 L5,6 Z" fill="#fff"/></svg>
<div id="ptitle" class="a">Explore the database</div>
<div class="a" style="left:876px;top:65px;width:8px;height:2px;background:#eee"></div>
<svg class="a" style="left:897px;top:58px" width="11" height="11" viewBox="0 0 11 11"><path d="M1,1 L10,10 M10,1 L1,10" stroke="#f0f0f0" stroke-width="1.8"/></svg>
<div id="pbody" class="a"></div>
<div id="sb" class="a"></div>
<div id="sbt" class="a"></div>
<svg class="a" style="left:555px;top:93px" width="10" height="7" viewBox="0 0 10 7"><path d="M1,1 L5,5 L9,1" stroke="#aaa" stroke-width="1.2" fill="none"/></svg>
<svg class="a" style="left:570px;top:91px" width="15" height="15" viewBox="0 0 15 15"><g fill="none" stroke="#333"><circle cx="7.5" cy="7.5" r="6" stroke-width="1.2"/><g stroke-width="0.75"><ellipse cx="7.5" cy="7.5" rx="3" ry="6"/><path d="M7.5,1.5 V13.5 M1.5,7.5 H13.5 M2.3,4.6 H12.7 M2.3,10.4 H12.7"/></g></g></svg>
<div class="sech" style="left:591px;top:92px">Geographic Location</div>
<div class="tog" style="top:91px"><i></i></div>
<div class="lbl" style="top:116px">Region</div>
<div class="sel" style="top:135px"><span>- empty -</span><i></i></div>
<div class="lbl" style="top:171px">Subregion</div>
<div class="sel" style="top:190px"><span>- empty -</span><i></i></div>
<div class="lbl" style="top:227px">Country/Area</div>
<div class="sel" style="top:245px"><span>- empty -</span><i></i></div>
<div class="a" style="left:550px;top:281px;width:360px;height:3px;background:#fff"></div>
<svg class="a" style="left:555px;top:297px" width="10" height="7" viewBox="0 0 10 7"><path d="M1,1 L5,5 L9,1" stroke="#bbb" stroke-width="1.2" fill="none"/></svg>
<svg class="a" style="left:570px;top:294px" width="16" height="14" viewBox="0 0 16 14"><path d="M1.3,2.8 C3.5,3.5 5.5,5 7,7 C9,8.5 11,10 14,12.8" fill="none" stroke="#1a1a1a" stroke-width="1.1" stroke-linecap="round"/><path d="M5.5,6.2 C6.5,6 8.5,7 9.2,8.5 C8.5,9 7.5,9.2 6.5,9 L5,10.5 L5.8,8.5 Z" fill="#1a1a1a"/></svg>
<div class="sech" style="left:591px;top:295px">Seabird Species</div>
<div class="tog" style="top:295px"><i></i></div>
<div class="lbl" style="top:320px">Seabird Family</div>
<div class="sel" style="top:338px"><span>- empty -</span><i></i></div>
<div class="lbl" style="top:375px">Target Seabird (by Scientific Name)</div>
<div class="sel" style="top:393px"><span>- empty -</span><i></i></div>
<svg class="a" style="left:904px;top:423px" width="9" height="8" viewBox="0 0 9 8"><g fill="#444"><rect x="6" y="5" width="2" height="2"/><rect x="3" y="5" width="2" height="2" fill="#999"/><rect x="6" y="2" width="2" height="2" fill="#999"/><rect x="0" y="5" width="2" height="2" fill="#ccc"/><rect x="3" y="2" width="2" height="2" fill="#ccc"/><rect x="6" y="-1" width="2" height="2" fill="#ccc"/></g></svg>
</body></html>
